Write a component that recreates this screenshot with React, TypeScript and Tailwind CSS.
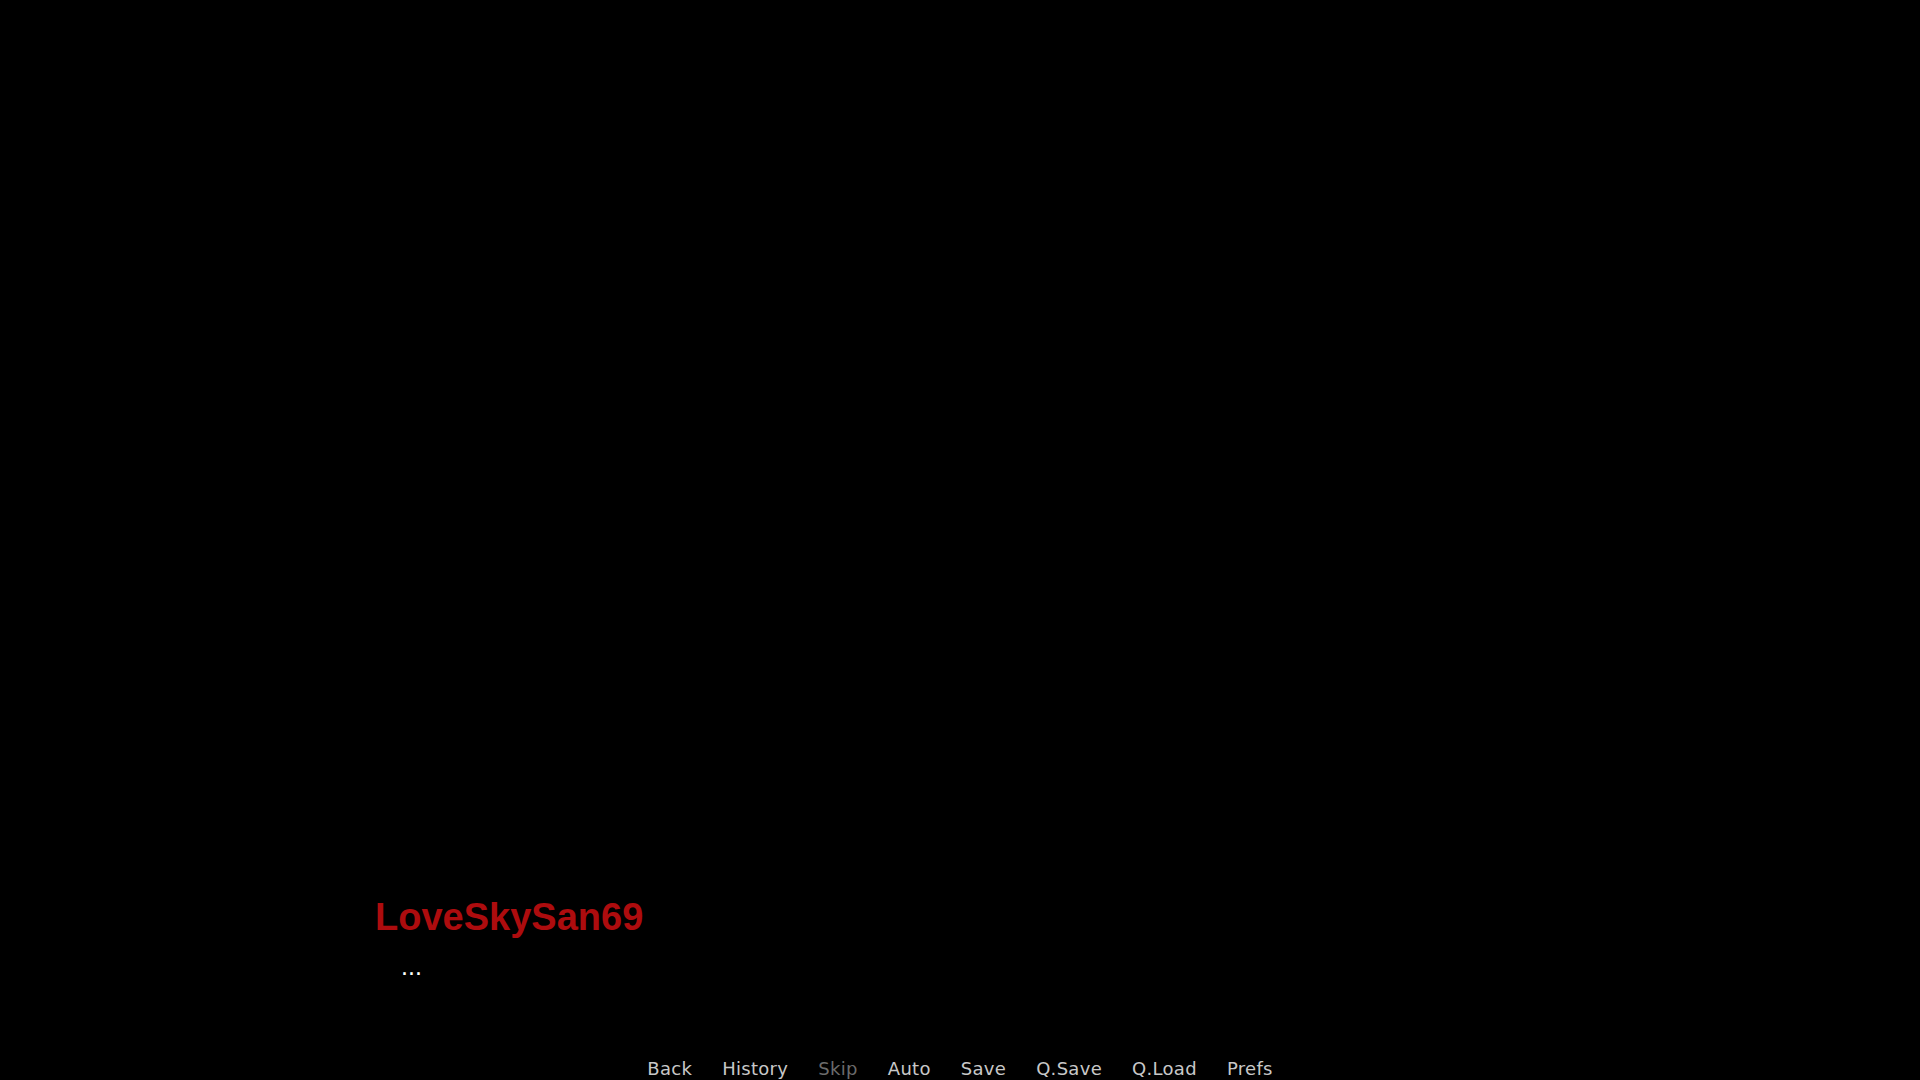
const quickItems = [
  { label: 'Back', dim: false },
  { label: 'History', dim: false },
  { label: 'Skip', dim: true },
  { label: 'Auto', dim: false },
  { label: 'Save', dim: false },
  { label: 'Q.Save', dim: false },
  { label: 'Q.Load', dim: false },
  { label: 'Prefs', dim: false },
];

export default function App() {
  return (
    <div className="w-[1920px] h-[1080px] bg-black flex flex-col justify-end overflow-hidden">
      <div className="pl-[375px]">
        <div className="text-[38px] leading-[38px] font-bold text-[#ad0c0e] font-['Liberation_Sans',Arial,sans-serif]">
          LoveSkySan69
        </div>
        <div className="mt-[18px] pl-[26px] text-[25px] leading-[25px] text-white font-['Liberation_Sans',Arial,sans-serif]">
          ...
        </div>
      </div>
      <div className="mt-[81px] pb-[2px] flex justify-center gap-[30px] font-['DejaVu_Sans',sans-serif] text-[18px] leading-[18px] tracking-[0.3px]">
        {quickItems.map((item) => (
          <button
            key={item.label}
            className={item.dim ? 'text-[#6b6b6b]' : 'text-[#c8c8c8]'}
          >
            {item.label}
          </button>
        ))}
      </div>
    </div>
  );
}
